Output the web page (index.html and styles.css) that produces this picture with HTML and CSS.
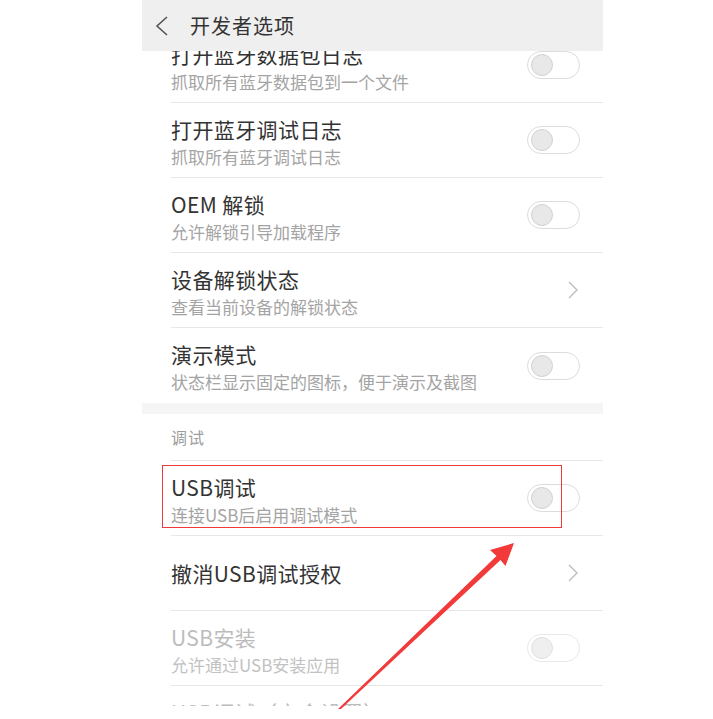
FILE: index.html
```html
<!DOCTYPE html>
<html lang="zh-CN">
<head>
  <meta charset="UTF-8">
  <title>开发者选项</title>
  <link rel="stylesheet" href="styles.css">
</head>
<body>
  <div class="phone">
    <div class="appbar">
      <svg class="back" width="14" height="22" viewBox="0 0 14 22">
        <polyline points="12,2 2,11 12,20" fill="none" stroke="#555" stroke-width="1.6"/>
      </svg>
      <span class="appbar-title">开发者选项</span>
    </div>

    <div class="viewport">
      <div class="list">
        <div class="row">
          <div class="row-text">
            <div class="row-title">打开蓝牙数据包日志</div>
            <div class="row-sub">抓取所有蓝牙数据包到一个文件</div>
          </div>
          <span class="switch"><span class="knob"></span></span>
        </div>
        <div class="row">
          <div class="row-text">
            <div class="row-title">打开蓝牙调试日志</div>
            <div class="row-sub">抓取所有蓝牙调试日志</div>
          </div>
          <span class="switch"><span class="knob"></span></span>
        </div>
        <div class="row">
          <div class="row-text">
            <div class="row-title">OEM 解锁</div>
            <div class="row-sub">允许解锁引导加载程序</div>
          </div>
          <span class="switch"><span class="knob"></span></span>
        </div>
        <div class="row">
          <div class="row-text">
            <div class="row-title">设备解锁状态</div>
            <div class="row-sub">查看当前设备的解锁状态</div>
          </div>
          <svg class="chevron" width="10" height="18" viewBox="0 0 10 18">
            <polyline points="1,1 9,9 1,17" fill="none" stroke="#bdbdbd" stroke-width="1.4"/>
          </svg>
        </div>
        <div class="row last">
          <div class="row-text">
            <div class="row-title">演示模式</div>
            <div class="row-sub">状态栏显示固定的图标，便于演示及截图</div>
          </div>
          <span class="switch"><span class="knob"></span></span>
        </div>

        <div class="band"></div>
        <div class="section-label">调试</div>

        <div class="row">
          <div class="row-text">
            <div class="row-title">USB调试</div>
            <div class="row-sub">连接USB后启用调试模式</div>
          </div>
          <span class="switch"><span class="knob"></span></span>
          <div class="highlight"></div>
        </div>
        <div class="row">
          <div class="row-text single">
            <div class="row-title">撤消USB调试授权</div>
          </div>
          <svg class="chevron" width="10" height="18" viewBox="0 0 10 18">
            <polyline points="1,1 9,9 1,17" fill="none" stroke="#bdbdbd" stroke-width="1.4"/>
          </svg>
        </div>
        <div class="row disabled">
          <div class="row-text">
            <div class="row-title">USB安装</div>
            <div class="row-sub">允许通过USB安装应用</div>
          </div>
          <span class="switch"><span class="knob"></span></span>
        </div>
        <div class="row disabled">
          <div class="row-text">
            <div class="row-title">USB调试（安全设置）</div>
            <div class="row-sub">允许通过USB调试修改权限或模拟点击</div>
          </div>
          <span class="switch"><span class="knob"></span></span>
        </div>
      </div>
    </div>
  </div>

  <svg class="arrow" width="713" height="719" viewBox="0 0 713 719">
    <polygon points="514,543 490,550 496.5,556 338,709 341,709 500.5,560 505.5,566" fill="#f23a3a"/>
  </svg>
</body>
</html>
```

FILE: styles.css
```css
html {
  margin: 0;
  padding: 0;
}

body {
  position: relative;
  margin: 0;
  width: 713px;
  height: 719px;
  background: #fff;
  font-family: "Noto Sans CJK SC", "Noto Sans", sans-serif;
}

.phone {
  width: 461px;
  height: 706px;
  margin-left: 142px;
  overflow: hidden;
  background: #fff;
}

.appbar {
  display: flex;
  align-items: center;
  height: 51px;
  padding-left: 13px;
  background: #efefef;

  >.back {
    margin-right: 21px;
  }
}

.appbar-title {
  font-size: 20px;
  letter-spacing: 1px;
  color: #333;
}

.viewport {
  height: 655px;
  overflow: hidden;
}

.list {
  margin-top: -23px;
}

.row {
  position: relative;
  display: flex;
  align-items: center;
  height: 74px;
  margin-left: 29px;
  padding-right: 23px;
  border-bottom: 1px solid #e7e7e7;

  &.last {
    height: 75px;
    border-bottom: none;
  }
}

.row-text {
  flex-grow: 1;
  padding-top: 3px;

  &.single {
    padding-top: 0;
  }
}

.row-title {
  font-size: 21px;
  letter-spacing: 0.4px;
  line-height: 26px;
  color: #333;
}

.row-sub {
  margin-top: 4px;
  font-size: 17px;
  line-height: 22px;
  color: #a4a4a4;
}

.disabled {
  .row-title {
    color: #bcbcbc;
  }

  .row-sub {
    color: #c2c2c2;
  }

  .switch {
    border-color: #e8e8e8;
  }

  .knob {
    background: #efefef;
    border-color: #e0e0e0;
  }
}

.switch {
  box-sizing: border-box;
  display: flex;
  align-items: center;
  width: 53px;
  height: 28px;
  padding-left: 3px;
  border: 1px solid #dcdcdc;
  border-radius: 14px;
}

.knob {
  box-sizing: border-box;
  width: 22px;
  height: 22px;
  border-radius: 50%;
  background: #e8e8e8;
  border: 1px solid #d2d2d2;
}

.chevron {
  margin-right: 2px;
}

.band {
  height: 11px;
  background: #f5f5f5;
}

.section-label {
  display: flex;
  align-items: center;
  height: 46px;
  margin-left: 29px;
  border-bottom: 1px solid #e7e7e7;
  font-size: 16px;
  letter-spacing: 1px;
  color: #9d9d9d;
}

.highlight {
  position: absolute;
  left: -9px;
  top: 4px;
  box-sizing: border-box;
  width: 400px;
  height: 63px;
  border: 1px solid #f03a3a;
}

.arrow {
  position: absolute;
  left: 0;
  top: 0;
  pointer-events: none;
}
```
